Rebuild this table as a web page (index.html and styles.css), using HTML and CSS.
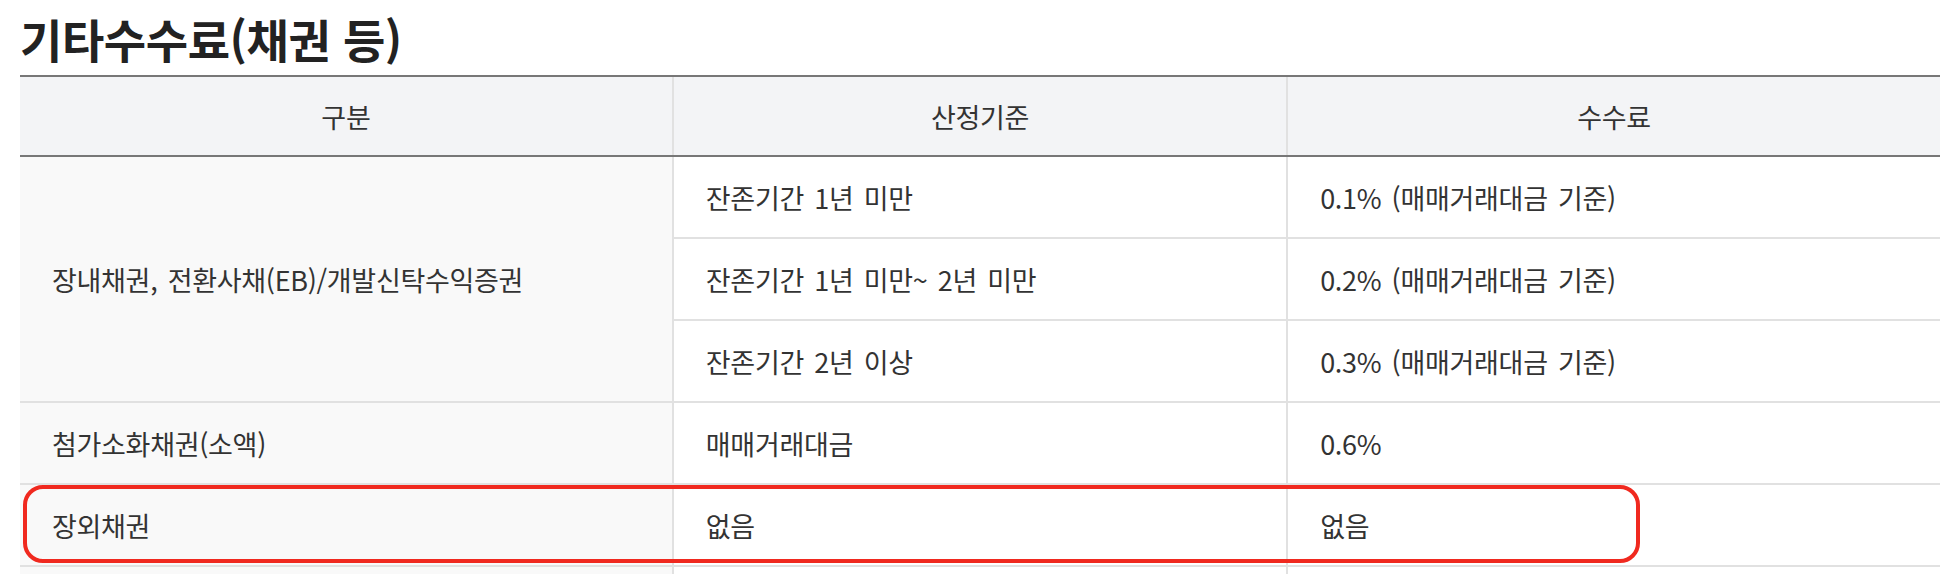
FILE: index.html
```html
<!DOCTYPE html>
<html lang="ko">
<head>
<meta charset="utf-8">
<title>기타수수료(채권 등)</title>
<link rel="stylesheet" href="styles.css">
</head>
<body>
<div class="page">
  <h2 class="title">기타수수료(채권 등)</h2>
  <div class="table-wrap">
    <table class="fee-table">
      <colgroup>
        <col class="c1"><col class="c2"><col class="c3">
      </colgroup>
      <thead>
        <tr><th>구분</th><th>산정기준</th><th>수수료</th></tr>
      </thead>
      <tbody>
        <tr>
          <td class="cat" rowspan="3">장내채권, 전환사채(EB)/개발신탁수익증권</td>
          <td>잔존기간 1년 미만</td>
          <td>0.1% (매매거래대금 기준)</td>
        </tr>
        <tr>
          <td>잔존기간 1년 미만~ 2년 미만</td>
          <td>0.2% (매매거래대금 기준)</td>
        </tr>
        <tr>
          <td>잔존기간 2년 이상</td>
          <td>0.3% (매매거래대금 기준)</td>
        </tr>
        <tr>
          <td class="cat">첨가소화채권(소액)</td>
          <td>매매거래대금</td>
          <td>0.6%</td>
        </tr>
        <tr>
          <td class="cat">장외채권</td>
          <td>없음</td>
          <td>없음</td>
        </tr>
        <tr>
          <td class="cat">&nbsp;</td>
          <td>&nbsp;</td>
          <td>&nbsp;</td>
        </tr>
      </tbody>
    </table>
    <div class="highlight"></div>
  </div>
</div>
</body>
</html>
```

FILE: styles.css
```css
html, body {
  margin: 0;
  padding: 0;
  background: #ffffff;
}

body {
  font-family: "Noto Sans CJK KR", "Noto Sans", sans-serif;
  color: #333333;
}

.page {
  padding: 8px 18px 0 20px;
}

.title {
  margin: 0 0 7px 0;
  font-size: 46px;
  line-height: 60px;
  font-weight: 700;
  color: #222222;
  letter-spacing: -0.4px;
}

.table-wrap {
  position: relative;
}

.fee-table {
  width: 100%;
  border-collapse: collapse;
  table-layout: fixed;
  font-size: 27px;
  letter-spacing: -0.3px;
  word-spacing: 3px;
}

.c1 { width: 34%; }
.c2 { width: 32%; }
.c3 { width: 34%; }

.fee-table th {
  height: 78px;
  padding: 0;
  font-weight: 400;
  color: #333333;
  background: #f3f4f6;
  border-top: 2px solid #777777;
  border-bottom: 2px solid #777777;
  text-align: center;
  vertical-align: middle;
}

.fee-table th + th,
.fee-table td + td {
  border-left: 2px solid #e1e1e1;
}

.fee-table td {
  height: 80px;
  padding: 0 32px;
  border-bottom: 2px solid #e1e1e1;
  text-align: left;
  vertical-align: middle;
  color: #333333;
  background: #ffffff;
}

.fee-table tbody tr:nth-child(2) td:first-child,
.fee-table tbody tr:nth-child(3) td:first-child {
  border-left: 2px solid #e1e1e1;
}

.fee-table td.cat {
  background: #f9f9f9;
}

.highlight {
  position: absolute;
  left: 3px;
  top: 410px;
  width: 1617px;
  height: 78px;
  box-sizing: border-box;
  border: 4px solid #f0291f;
  border-radius: 20px;
  pointer-events: none;
}
```
